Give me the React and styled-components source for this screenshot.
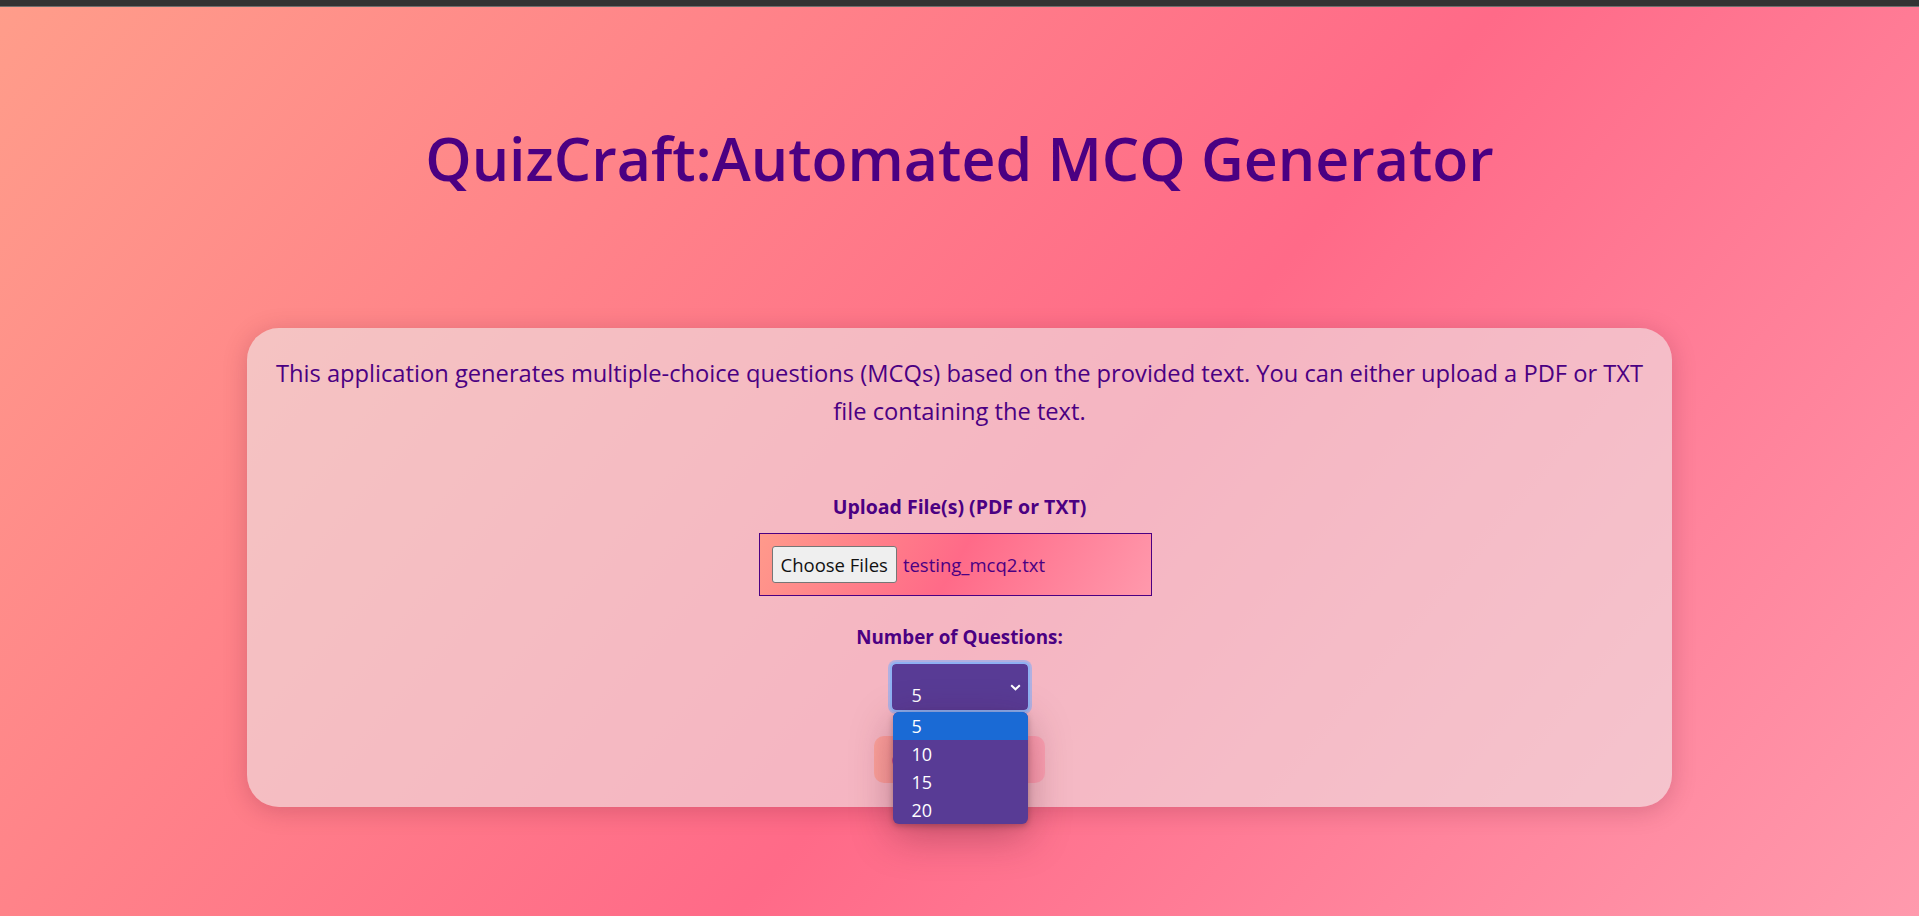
import React from "react";
import styled, { createGlobalStyle } from "styled-components";

const GlobalStyle = createGlobalStyle`
  html, body {
    margin: 0;
    min-height: 100%;
  }
  body {
    font-family: "Open Sans", "Noto Sans", "DejaVu Sans", sans-serif;
    color: #4b0082;
    background: linear-gradient(130deg, #ff9d8a 0%, #ff6a88 56%, #ff9aad 100%);
    background-attachment: fixed;
    min-height: 916px;
  }
`;

const TopBar = styled.div`
  height: 6px;
  background: #333333;
  border-bottom: 1px solid #6e6e6e;
`;

const Page = styled.main`
  display: flex;
  flex-direction: column;
  align-items: center;
  padding: 110px 0 60px;
`;

const Title = styled.h1`
  margin: 0 0 129px;
  font-size: 59px;
  font-weight: 600;
  line-height: 82px;
  color: #4b0082;
  white-space: nowrap;
`;

const Card = styled.section`
  box-sizing: border-box;
  width: 1425px;
  padding: 26px 14px 24px;
  border-radius: 32px;
  background: rgba(238, 236, 236, 0.58);
  box-shadow: 0 4px 24px rgba(90, 20, 40, 0.22);
  display: flex;
  flex-direction: column;
  align-items: center;
`;

const Intro = styled.p`
  margin: 0 0 64px;
  font-size: 23.7px;
  line-height: 38px;
  text-align: center;
`;

const Label = styled.label`
  display: block;
  margin-bottom: 14px;
  font-size: ${(p) => p.$size || 19.5}px;
  font-weight: 700;
  line-height: 25px;
  text-align: center;
`;

const FileBox = styled.div`
  box-sizing: border-box;
  width: 393px;
  height: 63px;
  margin: 0 9px 29px 0;
  padding: 0 12px;
  display: flex;
  align-items: center;
  gap: 6px;
  border: 1px solid #4b0082;
  background: linear-gradient(120deg, #ff9a8b 0%, #ff6a88 50%, #ff99ac 100%);
`;

const ChooseButton = styled.span`
  box-sizing: border-box;
  height: 37px;
  padding: 0 8px;
  display: inline-flex;
  align-items: center;
  background: #efefef;
  border: 1px solid #767676;
  border-radius: 3px;
  color: #111;
  font-size: 18.5px;
  white-space: nowrap;
`;

const FileName = styled.span`
  font-size: 18.5px;
  color: #4b0082;
`;

const SelectWrap = styled.div`
  position: relative;
  margin-bottom: 26px;
`;

const SelectBox = styled.div`
  box-sizing: border-box;
  width: 136px;
  height: 46px;
  padding: 17px 20px 0;
  overflow: hidden;
  display: flex;
  justify-content: space-between;
  background: #583b95;
  border-radius: 4px;
  color: #fff;
  font-size: 18px;
  line-height: 28px;
  outline: 2px solid #8fb1f2;
  box-shadow: 0 0 0 4px rgba(170, 175, 228, 0.9);
`;

const Chevron = styled.svg`
  position: absolute;
  right: 7px;
  top: 20px;
`;

const Menu = styled.ul`
  position: absolute;
  top: 48px;
  left: 1px;
  z-index: 5;
  width: 135px;
  margin: 0;
  padding: 0;
  list-style: none;
  overflow: hidden;
  background: #583b95;
  border-radius: 6px;
  box-shadow: 0 12px 40px rgba(80, 20, 40, 0.35), 0 2px 6px rgba(0, 0, 0, 0.25);
`;

const Option = styled.li`
  height: 28px;
  padding-left: 19px;
  color: #fff;
  font-size: 18px;
  line-height: 28px;
  background: ${(p) => (p.$active ? "#1a6ad5" : "transparent")};
`;

const Generate = styled.button`
  width: 171px;
  height: 47px;
  border: none;
  border-radius: 10px;
  background: linear-gradient(90deg, #ff9a8b, #ff6a88 55%, #ff99ac);
  opacity: 0.7;
  color: #4b0082;
  font-family: inherit;
  font-size: 18px;
  font-weight: 600;
`;

const questionCounts = [5, 10, 15, 20];

export default function App() {
  return (
    <>
      <GlobalStyle />
      <TopBar />
      <Page>
        <Title>QuizCraft:Automated MCQ Generator</Title>
        <Card>
          <Intro>
            This application generates multiple-choice questions (MCQs) based on
            the provided text. You can either upload a PDF or TXT file
            containing the text.
          </Intro>

          <Label>Upload File(s) (PDF or TXT)</Label>
          <FileBox>
            <ChooseButton>Choose Files</ChooseButton>
            <FileName>testing_mcq2.txt</FileName>
          </FileBox>

          <Label $size={18.8}>Number of Questions:</Label>
          <SelectWrap>
            <SelectBox role="combobox" aria-expanded="true">
              <span>5</span>
            </SelectBox>
            <Chevron width="11" height="7" viewBox="0 0 11 7">
              <path d="M1.2 1.2 L5.5 5.3 L9.8 1.2" fill="none" stroke="#fff" strokeWidth="2" />
            </Chevron>
            <Menu role="listbox">
              {questionCounts.map((n) => (
                <Option key={n} $active={n === 5}>
                  {n}
                </Option>
              ))}
            </Menu>
          </SelectWrap>

          <Generate>Generate MCQs</Generate>
        </Card>
      </Page>
    </>
  );
}
